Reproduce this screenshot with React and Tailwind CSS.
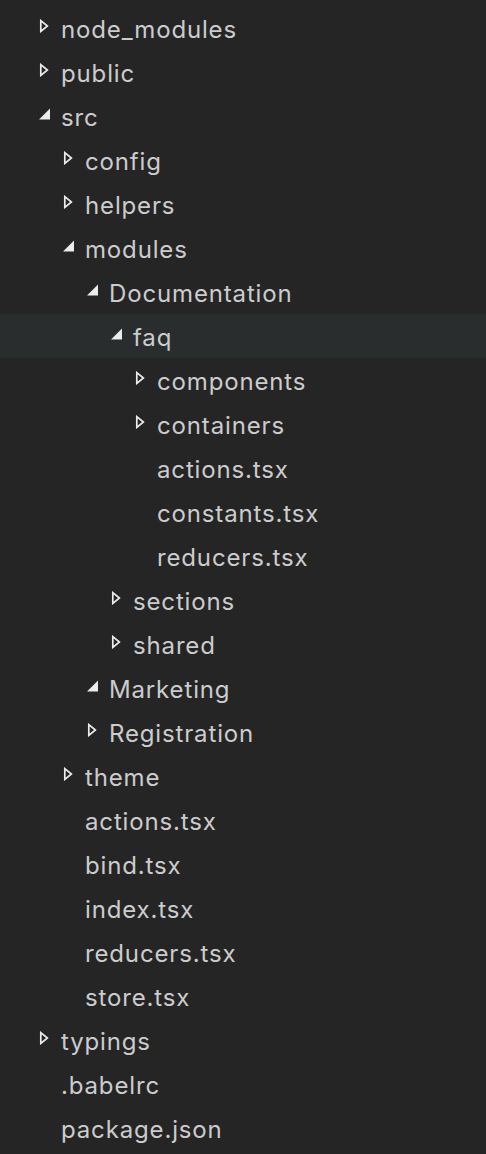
import React from 'react';

const tree = [
  { name: 'node_modules', depth: 0, type: 'closed' },
  { name: 'public', depth: 0, type: 'closed' },
  { name: 'src', depth: 0, type: 'open' },
  { name: 'config', depth: 1, type: 'closed' },
  { name: 'helpers', depth: 1, type: 'closed' },
  { name: 'modules', depth: 1, type: 'open' },
  { name: 'Documentation', depth: 2, type: 'open' },
  { name: 'faq', depth: 3, type: 'open', active: true },
  { name: 'components', depth: 4, type: 'closed' },
  { name: 'containers', depth: 4, type: 'closed' },
  { name: 'actions.tsx', depth: 4, type: 'file' },
  { name: 'constants.tsx', depth: 4, type: 'file' },
  { name: 'reducers.tsx', depth: 4, type: 'file' },
  { name: 'sections', depth: 3, type: 'closed' },
  { name: 'shared', depth: 3, type: 'closed' },
  { name: 'Marketing', depth: 2, type: 'open' },
  { name: 'Registration', depth: 2, type: 'closed' },
  { name: 'theme', depth: 1, type: 'closed' },
  { name: 'actions.tsx', depth: 1, type: 'file' },
  { name: 'bind.tsx', depth: 1, type: 'file' },
  { name: 'index.tsx', depth: 1, type: 'file' },
  { name: 'reducers.tsx', depth: 1, type: 'file' },
  { name: 'store.tsx', depth: 1, type: 'file' },
  { name: 'typings', depth: 0, type: 'closed' },
  { name: '.babelrc', depth: 0, type: 'file' },
  { name: 'package.json', depth: 0, type: 'file' },
];

const pad = ['pl-[36px]', 'pl-[60px]', 'pl-[84px]', 'pl-[108px]', 'pl-[132px]'];

function Twisty({ type }) {
  if (type === 'closed') {
    return (
      <svg width="12" height="14" viewBox="0 0 12 14" className="mb-[5px] ml-[3px]">
        <path d="M1.8 1.6 L8.4 7 L1.8 12.4 Z" fill="none" stroke="#ececec" strokeWidth="1.7" strokeLinejoin="miter" />
      </svg>
    );
  }
  if (type === 'open') {
    return (
      <svg width="14" height="14" viewBox="0 0 14 14" className="mb-[5px] ml-[1px]">
        <path d="M13 1.5 L13 12.5 L2 12.5 Z" fill="#ececec" />
      </svg>
    );
  }
  return null;
}

export default function App() {
  return (
    <div className="min-h-screen bg-[#252526] pt-[6px] text-[#cccccc]" style={{ fontFamily: 'Inter, "Noto Sans", sans-serif' }}>
      {tree.map((item, i) => (
        <div
          key={i}
          className={`flex h-[44px] items-center ${pad[item.depth]} ${item.active ? 'bg-[#2a2d2e]' : ''}`}
        >
          <div className="flex w-[25px] items-center">
            <Twisty type={item.type} />
          </div>
          <span className="pt-[3px] text-[24px] leading-none tracking-[0.85px]">{item.name}</span>
        </div>
      ))}
    </div>
  );
}
